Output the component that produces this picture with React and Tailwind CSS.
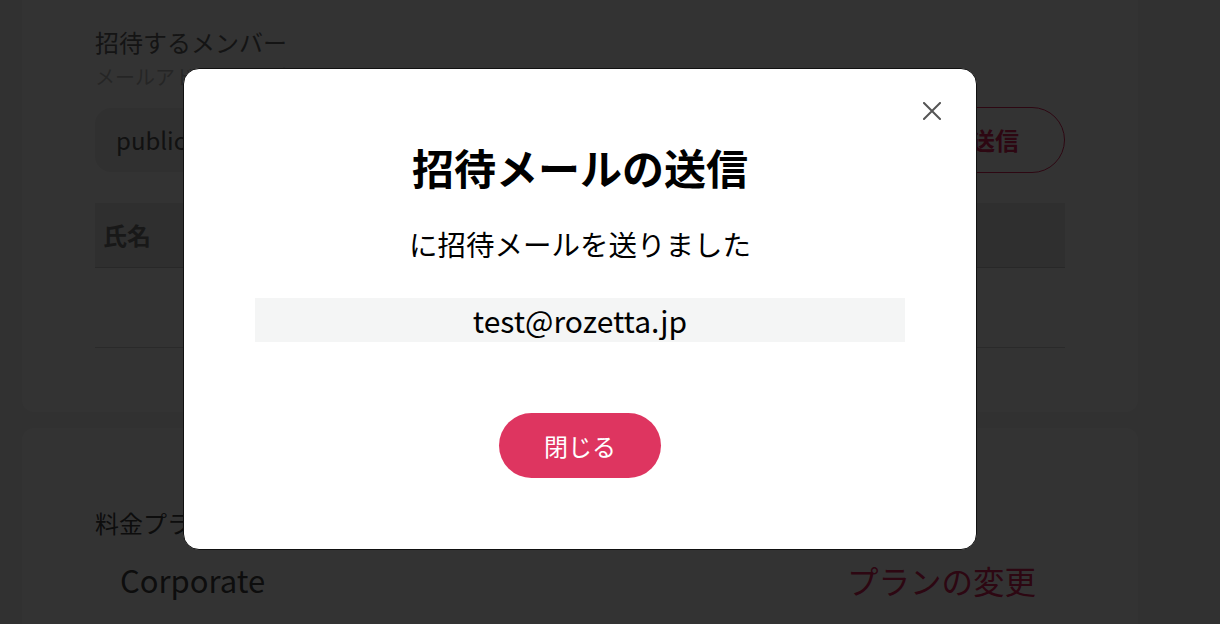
import React from "react";

const font = { fontFamily: '"Noto Sans CJK JP", "Noto Sans", sans-serif' };

function BackgroundPage() {
  return (
    <div className="min-h-[624px] bg-[#f2f2f2] pl-[22px] pt-0">
      {/* Members card */}
      <div className="w-[1116px] h-[412px] bg-white rounded-b-xl pl-[73px] pr-[73px] pt-[24px]">
        <h2 className="text-[24px] leading-[36px] text-[#666]">招待するメンバー</h2>
        <p className="text-[20px] leading-[28px] text-[#bbb] mt-[3px]">
          メールアドレスを入力してください
        </p>
        <div className="flex items-center gap-6 mt-[16px]">
          <div className="flex-1 h-[64px] rounded-2xl bg-[#f0f0f0] flex items-center px-[21px] text-[24px] text-[#555]">
            public@rozetta.jp
          </div>
          <button className="h-[66px] px-[45px] rounded-full border border-[#e0245a] text-[#e0245a] font-bold text-[24px]">
            送信
          </button>
        </div>
        <div className="mt-[30px] h-[65px] bg-[#eaeaea] border-b border-[#c8c8c8] flex items-center px-[8px]">
          <span className="font-bold text-[24px] text-[#777]">氏名</span>
        </div>
        <div className="h-[80px] border-b border-[#d0d0d0]" />
      </div>

      {/* Plan card */}
      <div className="w-[1116px] h-[196px] bg-white rounded-t-xl mt-[16px] pl-[73px] pr-[102px] pt-[79px]">
        <h2 className="text-[24px] leading-[32px] text-[#444]">料金プラン</h2>
        <div className="flex items-center justify-between mt-[21px] pl-[25px]">
          <span className="text-[31px] leading-[40px] text-[#444]">Corporate</span>
          <span className="text-[31.5px] leading-[40px] text-[#e0245a]">プランの変更</span>
        </div>
      </div>
    </div>
  );
}

function InviteSentModal() {
  return (
    <div className="fixed inset-0 bg-black/80 flex items-center justify-center pr-[60px] pb-[6px]">
      <div className="relative w-[794px] h-[482px] bg-white rounded-2xl border border-[#111] flex flex-col items-center pt-[71px]">
        <button className="absolute top-[33px] right-[35px] w-[18px] h-[18px]" aria-label="close">
          <svg viewBox="0 0 18 18" className="w-[18px] h-[18px]">
            <path d="M1 1 L17 17 M17 1 L1 17" stroke="#555" strokeWidth="2" strokeLinecap="square" fill="none" />
          </svg>
        </button>
        <h1 className="text-[42px] leading-[54px] font-bold text-black">招待メールの送信</h1>
        <p className="mt-[30px] text-[28.5px] leading-[40px] text-black">に招待メールを送りました</p>
        <div className="mt-[34px] w-[650px] h-[44px] bg-[#f4f5f5] flex items-center justify-center text-[30px] leading-[40px] text-black">
          test@rozetta.jp
        </div>
        <button className="mt-[71px] w-[162px] h-[65px] rounded-full bg-[#de3560] text-white text-[24px]">
          閉じる
        </button>
      </div>
    </div>
  );
}

export default function App() {
  return (
    <div style={font} className="relative w-[1220px] h-[624px] overflow-hidden">
      <BackgroundPage />
      <InviteSentModal />
    </div>
  );
}
